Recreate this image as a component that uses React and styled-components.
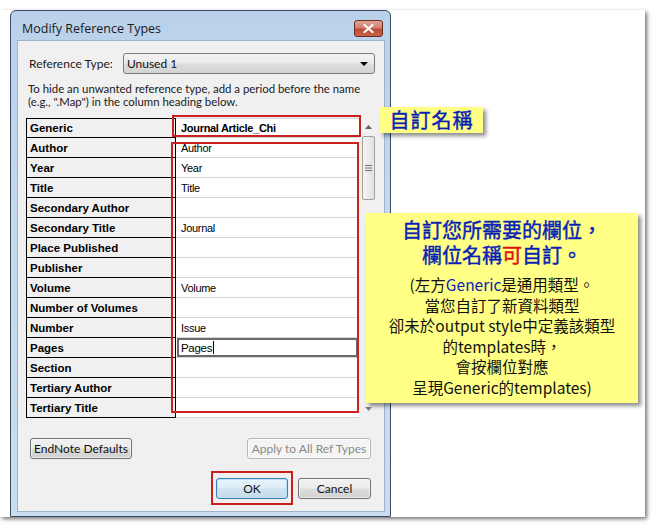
import styled, { createGlobalStyle } from "styled-components";

const GlobalStyle = createGlobalStyle`
  html, body {
    margin: 0;
    padding: 0;
    background: #ffffff;
  }
`;

const fields = [
  ["Author", "Author"],
  ["Year", "Year"],
  ["Title", "Title"],
  ["Secondary Author", ""],
  ["Secondary Title", "Journal"],
  ["Place Published", ""],
  ["Publisher", ""],
  ["Volume", "Volume"],
  ["Number of Volumes", ""],
  ["Number", "Issue"],
  ["Pages", "Pages", true],
  ["Section", ""],
  ["Tertiary Author", ""],
  ["Tertiary Title", ""],
];

const Page = styled.div`
  position: relative;
  width: 656px;
  height: 529px;
  overflow: hidden;
`;

const Paper = styled.div`
  margin-top: 10px;
  width: 645px;
  height: 507px;
  padding-left: 10px;
  box-sizing: border-box;
  background: #ffffff;
  box-shadow: 2px 2px 4px rgba(0, 0, 0, 0.55);
`;

const Dialog = styled.div`
  width: 381px;
  height: 507px;
  box-sizing: border-box;
  border: 1px solid #3b4b62;
  border-radius: 6px 6px 0 0;
  background: linear-gradient(180deg, #b9d1ea 0%, #c4d8ee 40%, #c9dcf0 100%);
  display: flex;
  flex-direction: column;
  padding: 0 5px 4px 6px;
`;

const TitleBar = styled.div`
  height: 29px;
  display: flex;
  align-items: center;
  justify-content: space-between;
  padding: 6px 2px 0 5px;
  box-sizing: border-box;
`;

const TitleText = styled.span`
  font-family: "Open Sans", "Noto Sans", sans-serif;
  font-size: 12.5px;
  color: #1b1b1b;
`;

const CloseButton = styled.div`
  width: 29px;
  height: 17px;
  border: 1px solid #6b2a22;
  border-radius: 3px;
  box-sizing: border-box;
  background: linear-gradient(180deg, #e0a696 0%, #d08070 45%, #bf4a36 55%, #c8644c 100%);
  display: flex;
  align-items: center;
  justify-content: center;
`;

const Client = styled.div`
  flex: 1;
  background: #f0f0f0;
  border: 1px solid #9fb3cb;
  display: flex;
  flex-direction: column;
  padding: 12px 9px 0 8px;
`;

const TypeRow = styled.div`
  display: flex;
  align-items: center;
  padding-left: 3px;
  gap: 10px;
`;

const UiLabel = styled.span`
  font-family: "Lato", "Open Sans", sans-serif;
  font-size: 12px;
  color: #1a1a1a;
`;

const Select = styled.div`
  flex: 1;
  height: 21px;
  box-sizing: border-box;
  border: 1px solid #7d7d7d;
  border-radius: 3px;
  background: linear-gradient(180deg, #f3f3f3 0%, #ebebeb 48%, #dddddd 52%, #d3d3d3 100%);
  display: flex;
  align-items: center;
  justify-content: space-between;
  padding: 0 6px 0 3px;
  font-family: "Lato", "Open Sans", sans-serif;
  font-size: 12px;
  color: #111;
`;

const Arrow = styled.span`
  width: 0;
  height: 0;
  border-left: 4px solid transparent;
  border-right: 4px solid transparent;
  border-top: 4px solid #000;
`;

const Hint = styled.p`
  margin: 9px 0 0 2px;
  font-family: "Lato", "Open Sans", sans-serif;
  font-size: 11.4px;
  line-height: 12.5px;
  white-space: nowrap;
  color: #1a1a1a;
`;

const TableWrap = styled.div`
  position: relative;
  margin-top: 10px;
  display: flex;
  width: 349px;
`;

const Rows = styled.div`
  display: flex;
  flex-direction: column;
  width: 333px;
`;

const Row = styled.div`
  display: grid;
  grid-template-columns: 150px 1fr;
  height: 20px;
`;

const LabelCell = styled.div`
  border-left: 1px solid #000;
  border-right: 1px solid #000;
  border-bottom: 1px solid #000;
  border-top: ${(p) => (p.$first ? "1px solid #000" : "none")};
  background: #f0f0f0;
  box-sizing: border-box;
  display: flex;
  align-items: center;
  padding-left: 3px;
  font-family: "Liberation Sans", Arial, sans-serif;
  font-weight: bold;
  font-size: 11.5px;
  color: #000;
`;

const ValueCell = styled.div`
  background: #fff;
  border-bottom: 1px solid #d5d5d5;
  border-top: ${(p) => (p.$first ? "1px solid #d5d5d5" : "none")};
  box-sizing: border-box;
  display: flex;
  align-items: center;
  padding-left: ${(p) => (p.$flush ? 0 : 5)}px;
  font-family: "Liberation Sans", Arial, sans-serif;
  font-size: 11px;
  letter-spacing: -0.3px;
  font-weight: ${(p) => (p.$bold ? "bold" : "normal")};
  color: #000;
`;

const EditBox = styled.div`
  margin: 0 1px;
  flex: 1;
  height: 19px;
  box-sizing: border-box;
  border: 2px solid #6a6a6a;
  display: flex;
  align-items: center;
  padding-left: 2px;
  font-family: "Liberation Sans", Arial, sans-serif;
  font-size: 11.5px;
`;

const Caret = styled.span`
  display: inline-block;
  width: 1px;
  height: 13px;
  background: #000;
  margin-left: 1px;
`;

const Scrollbar = styled.div`
  margin-left: 2px;
  width: 14px;
  display: flex;
  flex-direction: column;
  align-items: center;
  background: #f0f0f0;
`;

const ScrollArrow = styled.div`
  height: 18px;
  display: flex;
  align-items: center;
  justify-content: center;
`;

const Thumb = styled.div`
  width: 13px;
  height: 64px;
  box-sizing: border-box;
  border: 1px solid #a0a0a0;
  border-radius: 2px;
  background: linear-gradient(90deg, #f4f4f4, #e2e2e2);
  display: flex;
  align-items: center;
  justify-content: center;
`;

const Track = styled.div`
  flex: 1;
`;

const Highlight = styled.div`
  position: absolute;
  border: 2px solid #cc1f1f;
  box-sizing: border-box;
  pointer-events: none;
`;

const ButtonRow = styled.div`
  display: flex;
  justify-content: ${(p) => p.$justify || "space-between"};
  gap: 5px;
  margin-top: ${(p) => p.$top}px;
  padding: 0 4px 0 4px;
`;

const Button = styled.div`
  width: ${(p) => p.$w}px;
  height: 21px;
  box-sizing: border-box;
  border: 1px solid ${(p) => (p.$disabled ? "#b5b9bc" : p.$focus ? "#3c7fb1" : "#707070")};
  border-radius: 3px;
  background: ${(p) =>
    p.$disabled
      ? "#f4f4f4"
      : p.$focus
      ? "linear-gradient(180deg, #eaf6fd 0%, #dcecf7 48%, #cfe2f0 52%, #c6dcec 100%)"
      : "linear-gradient(180deg, #f2f2f2 0%, #ebebeb 48%, #dddddd 52%, #cfcfcf 100%)"};
  box-shadow: ${(p) => (p.$focus ? "inset 0 0 0 1px #b9e0f7" : "inset 0 0 0 1px rgba(255,255,255,0.6)")};
  display: flex;
  align-items: center;
  justify-content: center;
  font-family: "Lato", "Open Sans", sans-serif;
  font-size: 12px;
  color: ${(p) => (p.$disabled ? "#8a8a8a" : "#111")};
`;

const OkFrame = styled.div`
  border: 2px solid #cc1f1f;
  padding: 5px 3px 4px;
  margin: -7px 0 -6px 0;
`;

const Callout = styled.div`
  position: absolute;
  left: ${(p) => p.$x}px;
  top: ${(p) => p.$y}px;
  width: ${(p) => p.$w}px;
  height: ${(p) => p.$h}px;
  padding-top: ${(p) => p.$pt || 0}px;
  box-sizing: border-box;
  background: #ffff85;
  box-shadow: 3px 3px 4px rgba(0, 0, 0, 0.45);
  display: flex;
  flex-direction: column;
  align-items: center;
  font-family: "Noto Sans CJK TC", "Noto Sans", sans-serif;
`;

const CalloutTitle = styled.div`
  color: #0a1fb4;
  font-size: 20px;
  font-weight: 400;
  -webkit-text-stroke: 0.45px currentColor;
  line-height: 25px;
  letter-spacing: ${(p) => p.$ls || 0}px;
  text-align: center;
`;

const CalloutBody = styled.div`
  margin-top: 7px;
  color: #111;
  font-size: 15.5px;
  line-height: 20.6px;
  text-align: center;
`;

const Red = styled.span`
  color: #e01010;
`;

const Blue = styled.span`
  color: #0a1fb4;
`;

export default function App() {
  return (
    <Page>
      <GlobalStyle />
      <Paper>
        <Dialog>
          <TitleBar>
            <TitleText>Modify Reference Types</TitleText>
            <CloseButton>
              <svg width="11" height="9" viewBox="0 0 11 9">
                <path d="M1.5 1 L9.5 8 M9.5 1 L1.5 8" stroke="#fff" strokeWidth="2.2" strokeLinecap="round" />
              </svg>
            </CloseButton>
          </TitleBar>
          <Client>
            <TypeRow>
              <UiLabel>Reference Type:</UiLabel>
              <Select>
                <span>Unused 1</span>
                <Arrow />
              </Select>
            </TypeRow>
            <Hint>
              To hide an unwanted reference type, add a period before the name
              <br />
              (e.g., ".Map") in the column heading below.
            </Hint>
            <TableWrap>
              <Rows>
                <Row>
                  <LabelCell $first>Generic</LabelCell>
                  <ValueCell $first $bold>
                    Journal Article_Chi
                  </ValueCell>
                </Row>
                {fields.map(([label, value, editing]) => (
                  <Row key={label}>
                    <LabelCell>{label}</LabelCell>
                    {editing ? (
                      <ValueCell $flush>
                        <EditBox>
                          {value}
                          <Caret />
                        </EditBox>
                      </ValueCell>
                    ) : (
                      <ValueCell>{value}</ValueCell>
                    )}
                  </Row>
                ))}
              </Rows>
              <Scrollbar>
                <ScrollArrow>
                  <svg width="7" height="4" viewBox="0 0 7 4">
                    <path d="M0 4 L3.5 0 L7 4 Z" fill="#606060" />
                  </svg>
                </ScrollArrow>
                <Thumb>
                  <svg width="7" height="6" viewBox="0 0 7 6">
                    <path d="M0 0.5 H7 M0 3 H7 M0 5.5 H7" stroke="#707070" strokeWidth="1" />
                  </svg>
                </Thumb>
                <Track />
                <ScrollArrow>
                  <svg width="7" height="4" viewBox="0 0 7 4">
                    <path d="M0 0 L3.5 4 L7 0 Z" fill="#808080" />
                  </svg>
                </ScrollArrow>
              </Scrollbar>
              <Highlight style={{ left: 146, top: -3, width: 189, height: 22 }} />
              <Highlight style={{ left: 145, top: 24, width: 188, height: 271 }} />
            </TableWrap>
            <ButtonRow $top={20}>
              <Button $w={102}>EndNote Defaults</Button>
              <Button $w={124} $disabled>
                Apply to All Ref Types
              </Button>
            </ButtonRow>
            <ButtonRow $top={19} $justify="flex-end">
              <OkFrame>
                <Button $w={72} $focus>
                  OK
                </Button>
              </OkFrame>
              <Button $w={73}>Cancel</Button>
            </ButtonRow>
          </Client>
        </Dialog>
      </Paper>
      <Callout $x={380} $y={107} $w={103} $h={26}>
        <CalloutTitle $ls={1}>自訂名稱</CalloutTitle>
      </Callout>
      <Callout $x={366} $y={213} $w={272} $h={190} $pt={4}>
        <CalloutTitle>自訂您所需要的欄位，</CalloutTitle>
        <CalloutTitle>
          欄位名稱<Red>可</Red>自訂。
        </CalloutTitle>
        <CalloutBody>
          (左方<Blue>Generic</Blue>是通用類型。
          <br />
          當您自訂了新資料類型
          <br />
          卻未於output style中定義該類型
          <br />
          的templates時，
          <br />
          會按欄位對應
          <br />
          呈現Generic的templates)
        </CalloutBody>
      </Callout>
    </Page>
  );
}
